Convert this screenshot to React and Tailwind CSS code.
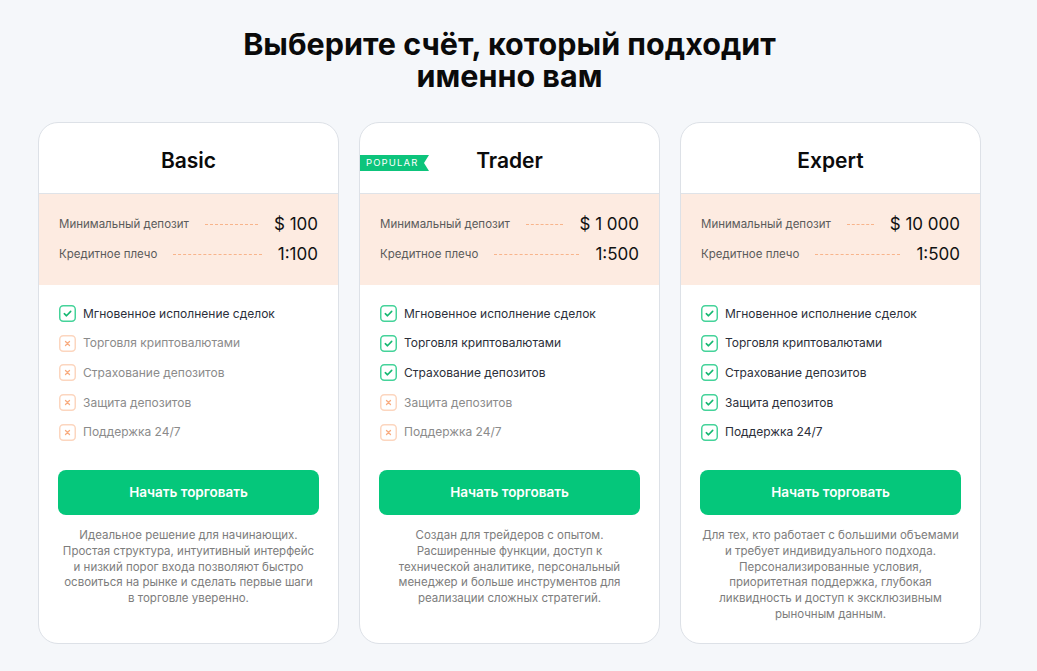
import React from "react";

const plans = [
  {
    name: "Basic",
    deposit: "$ 100",
    leverage: "1:100",
    features: [true, false, false, false, false],
    desc: "Идеальное решение для начинающих. Простая структура, интуитивный интерфейс и низкий порог входа позволяют быстро освоиться на рынке и сделать первые шаги в торговле уверенно.",
  },
  {
    name: "Trader",
    popular: true,
    deposit: "$ 1 000",
    leverage: "1:500",
    features: [true, true, true, false, false],
    desc: "Создан для трейдеров с опытом. Расширенные функции, доступ к технической аналитике, персональный менеджер и больше инструментов для реализации сложных стратегий.",
  },
  {
    name: "Expert",
    deposit: "$ 10 000",
    leverage: "1:500",
    features: [true, true, true, true, true],
    desc: "Для тех, кто работает с большими объемами и требует индивидуального подхода. Персонализированные условия, приоритетная поддержка, глубокая ликвидность и доступ к эксклюзивным рыночным данным.",
  },
];

const featureNames = [
  "Мгновенное исполнение сделок",
  "Торговля криптовалютами",
  "Страхование депозитов",
  "Защита депозитов",
  "Поддержка 24/7",
];

function CheckIcon() {
  return (
    <svg width="17" height="17" viewBox="0 0 17 17" fill="none">
      <rect x="0.75" y="0.75" width="15.5" height="15.5" rx="3.5" stroke="#45d39a" strokeWidth="1.5" />
      <path d="M5.3 8.7 L7.5 10.8 L11.7 6.4" stroke="#16b872" strokeWidth="1.6" strokeLinecap="round" strokeLinejoin="round" />
    </svg>
  );
}

function CrossIcon() {
  return (
    <svg width="17" height="17" viewBox="0 0 17 17" fill="none">
      <rect x="0.75" y="0.75" width="15.5" height="15.5" rx="3.5" stroke="#fcd6bf" strokeWidth="1.5" />
      <path d="M6.5 6.5 L10.5 10.5 M10.5 6.5 L6.5 10.5" stroke="#f8ac80" strokeWidth="1.3" strokeLinecap="round" />
    </svg>
  );
}

function Row({ label, value }) {
  return (
    <div className="flex h-[30px] items-center pt-[1px]">
      <span className="text-[11.5px] text-[#5b5b5b]">{label}</span>
      <div className="mx-4 flex-1 border-t border-dashed border-[#f8b48b]" />
      <span className="text-[17px] text-[#111]">{value}</span>
    </div>
  );
}

function Card({ plan }) {
  return (
    <div className="flex w-[301px] flex-col overflow-hidden rounded-[20px] border border-[#dde1e7] bg-white">
      <div className="relative flex h-[71px] items-center justify-center border-b border-[#dfe3e8] pt-[6px]">
        {plan.popular && (
          <div className="absolute left-0 top-[32px] flex h-[16px] w-[69px] items-center bg-[#0dc47c] pl-[6px] text-[9.5px] tracking-[0.12em] text-white [clip-path:polygon(0_0,100%_0,calc(100%-5px)_50%,100%_100%,0_100%)]">
            POPULAR
          </div>
        )}
        <h2 className="text-[21px] font-semibold text-[#0b0b0b]">{plan.name}</h2>
      </div>
      <div className="bg-[#fdebe1] px-[20px] pb-[16px] pt-[15px]">
        <Row label="Минимальный депозит" value={plan.deposit} />
        <Row label="Кредитное плечо" value={plan.leverage} />
      </div>
      <div className="flex flex-1 flex-col px-[19px] pb-[20px] pt-[14px]">
        <ul className="flex flex-col">
          {featureNames.map((f, i) => (
            <li key={f} className="flex h-[29.6px] items-center gap-[7px] pl-[1px]">
              {plan.features[i] ? <CheckIcon /> : <CrossIcon />}
              <span className={"text-[12px] " + (plan.features[i] ? "text-[#2c2f3a]" : "text-[#8b8b8b]")}>{f}</span>
            </li>
          ))}
        </ul>
        <button className="mt-[23px] h-[45px] w-full rounded-[8px] bg-[#05c77b] text-[13.5px] font-semibold text-white">
          Начать торговать
        </button>
        <p className="mt-[13px] px-[2px] text-center text-[11.5px] leading-[15.8px] text-[#7d7d7d]">{plan.desc}</p>
      </div>
    </div>
  );
}

export default function App() {
  return (
    <div className="min-h-[671px] w-full bg-[#f5f7fa] font-['Inter',sans-serif]">
      <div className="flex w-[1019px] flex-col items-center pt-[28px]">
        <h1 className="text-center text-[30.5px] font-bold leading-[32px] text-[#0a0a0a]">
          Выберите счёт, который подходит
          <br />
          именно вам
        </h1>
        <div className="mt-[30px] flex gap-[20px]">
          {plans.map((p) => (
            <Card key={p.name} plan={p} />
          ))}
        </div>
      </div>
    </div>
  );
}
